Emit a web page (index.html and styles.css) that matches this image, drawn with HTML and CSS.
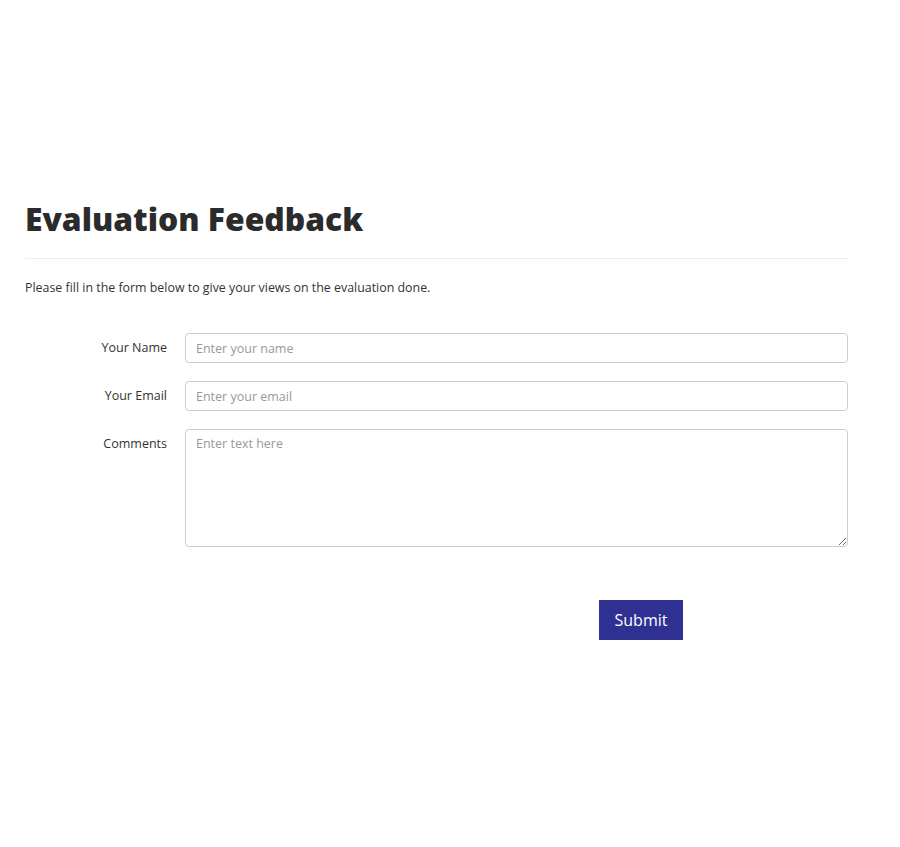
FILE: index.html
```html
<!DOCTYPE html>
<html>
<head>
<meta charset="utf-8">
<link rel="stylesheet" href="styles.css">
</head>
<body>
<div class="page">
  <h1 class="title">Evaluation Feedback</h1>
  <hr class="rule">
  <p class="intro">Please fill in the form below to give your views on the evaluation done.</p>
  <form class="form">
    <div class="row">
      <label class="label">Your Name</label>
      <input class="control" type="text" placeholder="Enter your name">
    </div>
    <div class="row">
      <label class="label">Your Email</label>
      <input class="control" type="text" placeholder="Enter your email">
    </div>
    <div class="row">
      <label class="label">Comments</label>
      <textarea class="control area" placeholder="Enter text here"></textarea>
    </div>
    <div class="actions">
      <button class="submit" type="button">Submit</button>
    </div>
  </form>
</div>
</body>
</html>
```
FILE: styles.css
```css
html, body {
  margin: 0;
  padding: 0;
  background: #fff;
}
body {
  font-family: "Open Sans", "Liberation Sans", sans-serif;
  color: #333;
}
.page {
  width: 823px;
  padding: 199px 0 0 25px;
}
.title {
  margin: 0;
  font-size: 31.8px;
  font-weight: 800;
  line-height: 40px;
  color: #2b2b2b;
}
.rule {
  margin: 19px 0 0 0;
  border: 0;
  border-top: 1px solid #eee;
  height: 0;
}
.intro {
  margin: 20px 0 0 0;
  font-size: 12.4px;
  line-height: 18px;
  color: #333;
}
.form {
  margin-top: 36px;
}
.row {
  display: flex;
  align-items: flex-start;
  margin-bottom: 18px;
}
.label {
  width: 142px;
  text-align: right;
  padding-right: 18px;
  font-size: 12.5px;
  line-height: 30px;
  color: #333;
}
.control {
  flex: 1;
  box-sizing: border-box;
  height: 30px;
  border: 1px solid #ccc;
  border-radius: 4px;
  padding: 0 10px;
  font-family: "Open Sans", "Liberation Sans", sans-serif;
  font-size: 12.5px;
  color: #555;
  background: #fff;
  margin: 0;
}
.control::placeholder {
  color: #999;
}
.area {
  height: 118px;
  padding: 5px 10px;
  line-height: 18px;
  resize: vertical;
}
.actions {
  display: flex;
  padding-left: 574px;
  margin-top: 53px;
}
.submit {
  width: 84px;
  height: 40px;
  border: 0;
  border-radius: 0;
  background: #2e3192;
  color: #fff;
  font-family: "Open Sans", "Liberation Sans", sans-serif;
  font-size: 16px;
  padding: 0;
}
```
